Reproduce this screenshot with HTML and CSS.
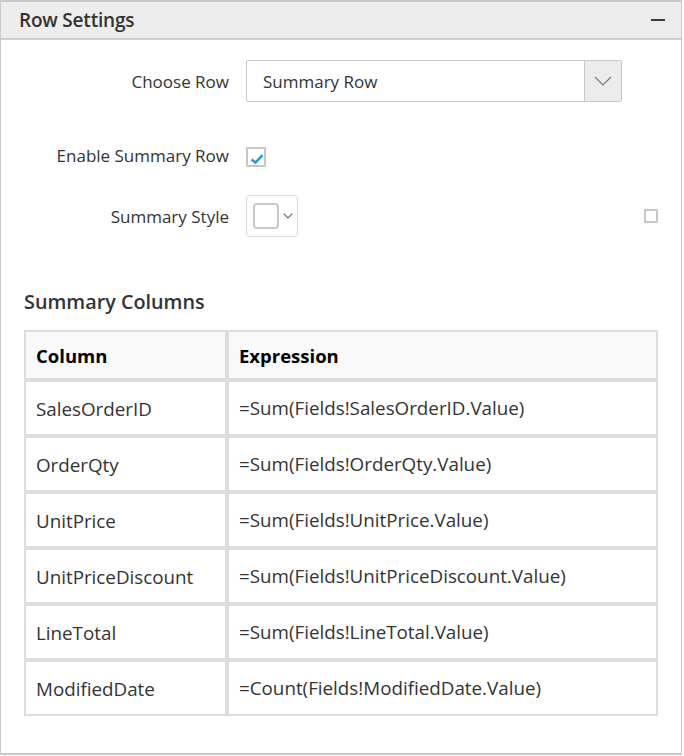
FILE: index.html
```html
<!DOCTYPE html>
<html lang="en">
<head>
<meta charset="utf-8">
<title>Row Settings</title>
<link rel="stylesheet" href="styles.css">
</head>
<body>
<div class="panel">
  <div class="panel-header">
    <span class="panel-title">Row Settings</span>
    <span class="collapse-icon"></span>
  </div>
  <div class="form">
    <div class="form-row row-choose">
      <label class="form-label">Choose Row</label>
      <div class="form-control">
        <div class="dropdown">
          <span class="dropdown-text">Summary Row</span>
          <span class="dropdown-btn">
            <svg width="18" height="10" viewBox="0 0 18 10"><path d="M1 1 L9 9 L17 1" fill="none" stroke="#7a7a7a" stroke-width="1.2"/></svg>
          </span>
        </div>
      </div>
    </div>
    <div class="form-row row-enable">
      <label class="form-label">Enable Summary Row</label>
      <div class="form-control">
        <span class="checkbox checked">
          <svg width="16" height="16" viewBox="0 0 16 16"><path d="M3.6 10.4 L7.4 13.6 L14.6 6.2" fill="none" stroke="#1a9de0" stroke-width="2.6" stroke-linejoin="miter"/></svg>
        </span>
      </div>
    </div>
    <div class="form-row row-style">
      <label class="form-label">Summary Style</label>
      <div class="form-control control-split">
        <span class="color-picker">
          <span class="swatch"></span>
          <svg class="picker-arrow" width="10" height="6" viewBox="0 0 10 6"><path d="M0.6 0.6 L5 5 L9.4 0.6" fill="none" stroke="#666" stroke-width="1.1"/></svg>
        </span>
        <span class="checkbox small"></span>
      </div>
    </div>
  </div>
  <div class="columns-section">
    <h2 class="section-title">Summary Columns</h2>
    <table class="grid">
      <thead>
        <tr><th class="col-name">Column</th><th>Expression</th></tr>
      </thead>
      <tbody>
        <tr><td>SalesOrderID</td><td>=Sum(Fields!SalesOrderID.Value)</td></tr>
        <tr><td>OrderQty</td><td>=Sum(Fields!OrderQty.Value)</td></tr>
        <tr><td>UnitPrice</td><td>=Sum(Fields!UnitPrice.Value)</td></tr>
        <tr><td>UnitPriceDiscount</td><td>=Sum(Fields!UnitPriceDiscount.Value)</td></tr>
        <tr><td>LineTotal</td><td>=Sum(Fields!LineTotal.Value)</td></tr>
        <tr><td>ModifiedDate</td><td>=Count(Fields!ModifiedDate.Value)</td></tr>
      </tbody>
    </table>
  </div>
</div>
</body>
</html>
```

FILE: styles.css
```css
* { box-sizing: border-box; }
html, body { margin: 0; padding: 0; background: #ffffff; }
body {
  font-family: "Segoe UI", "Open Sans", sans-serif;
  font-size: 17px;
  color: #333333;
}
.panel {
  width: 682px;
  height: 755px;
  border: 1px solid #c9c9c9;
  border-top-width: 2px;
  border-bottom-width: 2px;
  background: #ffffff;
}
.panel-header {
  height: 38px;
  background: #ededed;
  border-bottom: 2px solid #cccccc;
  display: flex;
  align-items: center;
  justify-content: space-between;
  padding: 0 16px 1px 18px;
}
.panel-title {
  font-size: 19px;
  font-weight: 600;
  color: #333333;
  letter-spacing: -0.2px;
}
.collapse-icon {
  width: 14px;
  height: 2px;
  background: #3a3a3a;
}
.form {
  padding-top: 20px;
}
.form-row {
  display: grid;
  grid-template-columns: 228px 1fr;
  column-gap: 17px;
  align-items: center;
}
.row-choose { height: 42px; }
.row-enable { height: 20px; margin-top: 45px; }
.row-style { height: 42px; margin-top: 28px; }
.form-label {
  text-align: right;
  white-space: nowrap;
  color: #333333;
}
.row-enable .form-label { margin-top: -3px; }
.form-control {
  display: flex;
  align-items: center;
}
.control-split {
  justify-content: space-between;
  padding-right: 23px;
}
.dropdown {
  width: 376px;
  height: 42px;
  border: 1px solid #c8c8c8;
  border-radius: 2px;
  display: flex;
  align-items: stretch;
}
.dropdown-text {
  flex: 1;
  display: flex;
  align-items: center;
  padding-left: 16px;
  color: #333333;
}
.dropdown-btn {
  width: 37px;
  background: #ececec;
  border-left: 1px solid #c8c8c8;
  display: flex;
  align-items: center;
  justify-content: center;
}
.checkbox {
  display: flex;
  align-items: center;
  justify-content: center;
  width: 20px;
  height: 20px;
  border: 2px solid #c6c6c6;
  background: #ffffff;
}
.checkbox.small {
  width: 14px;
  height: 14px;
}
.color-picker {
  width: 52px;
  height: 42px;
  border: 1px solid #dcdcdc;
  border-radius: 4px;
  display: flex;
  align-items: center;
  padding-left: 6px;
}
.swatch {
  width: 26px;
  height: 26px;
  border: 2px solid #c8c8c8;
  border-radius: 4px;
  background: #ffffff;
}
.picker-arrow {
  margin-left: 4px;
}
.columns-section {
  padding: 0 23px;
}
.section-title {
  margin: 53px 0 0 0;
  font-size: 19.8px;
  line-height: 24px;
  font-weight: 600;
  color: #333333;
}
.grid {
  margin-top: 16px;
  width: 634px;
  table-layout: fixed;
  border-collapse: separate;
  border-spacing: 0;
  font-size: 18.8px;
}
.grid th, .grid td {
  border: 2px solid #dddddd;
  padding: 0 10px;
  text-align: left;
  white-space: nowrap;
  overflow: hidden;
}
.grid th {
  background: #f9f9f9;
  color: #000000;
  font-weight: 700;
  font-size: 18.5px;
  line-height: 44px;
  padding-top: 2px;
}
.grid td {
  line-height: 50px;
  color: #333333;
  padding-top: 2px;
}
.grid td:last-child { padding-top: 1px; padding-bottom: 1px; }
.grid .col-name { width: 203px; }
```
